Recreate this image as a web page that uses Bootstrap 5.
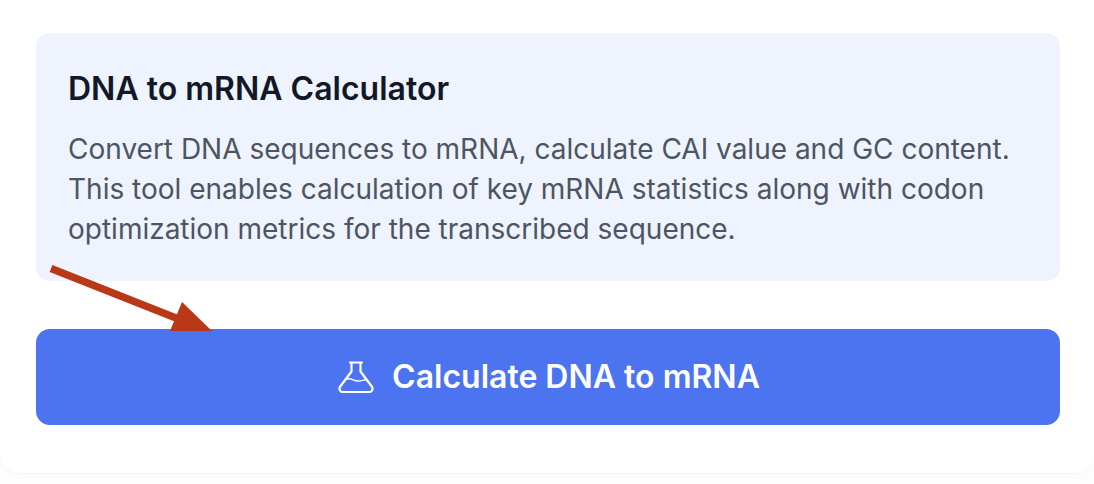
<!doctype html>
<html lang="en"><head><meta charset="utf-8">
<link rel="stylesheet" href="https://cdn.jsdelivr.net/npm/bootstrap@5.3.0/dist/css/bootstrap.min.css">
<style>
html,body{height:484px;overflow:hidden}
body{background:#fff;font-family:Inter,"Liberation Sans",sans-serif}
.stage{background:#fdfdfd;height:484px;width:1094px}
.panel{background:#fff;border-radius:0 0 20px 20px;height:473px;padding:33px 34px 0 36px;box-shadow:0 1px 2px rgba(0,0,0,.04)}
.info{background:#eff3fe;border-radius:14px;height:248px;padding:36px 32px 0;margin-bottom:48px}
.info h2{font-size:32px;font-weight:600;color:#111827;line-height:40px;margin:0 0 20px}
.info p{font-size:28px;line-height:40px;color:#4b5563;margin:0}
.calc{background:#4c73f0;border:0;border-radius:14px;height:96px;color:#fff;font-size:32px;font-weight:600;width:100%;gap:18px;padding-left:14px}
.calc:hover{background:#4c73f0;color:#fff}
.arrow{position:absolute;left:0;top:0;pointer-events:none}
</style></head><body>
<div class="stage position-relative">
<div class="panel">
<div class="info"><h2>DNA to mRNA Calculator</h2>
<p>Convert DNA sequences to mRNA, calculate CAI value and GC content. This tool enables calculation of key mRNA statistics along with codon optimization metrics for the transcribed sequence.</p></div>
<button class="btn calc d-flex align-items-center justify-content-center" type="button">
<svg width="36" height="32" viewBox="0 0 36 32" fill="none" stroke="#fff" stroke-width="2.200" stroke-linecap="round" stroke-linejoin="round"><path d="M12 1.500h12M13.500 1.500v9L2.200 25.500A3.400 3.400 0 0 0 5 31h26a3.400 3.400 0 0 0 2.800-5.500L22.500 10.500v-9"/><path d="M7.500 18.500c5-2.500 8 1.500 12 1.500s6-1 9-1.500" stroke-width="1.400"/></svg>
Calculate DNA to mRNA</button>
</div>
<svg class="arrow" width="1094" height="484" viewBox="0 0 1094 484"><path d="M51 268.500 176 318" stroke="#b93818" stroke-width="7.500" fill="none"/><path d="M212 331 170 331 182 302Z" fill="#b93818"/></svg>
</div>
<script src="https://cdn.jsdelivr.net/npm/bootstrap@5.3.0/dist/js/bootstrap.bundle.min.js"></script>
</body></html>
